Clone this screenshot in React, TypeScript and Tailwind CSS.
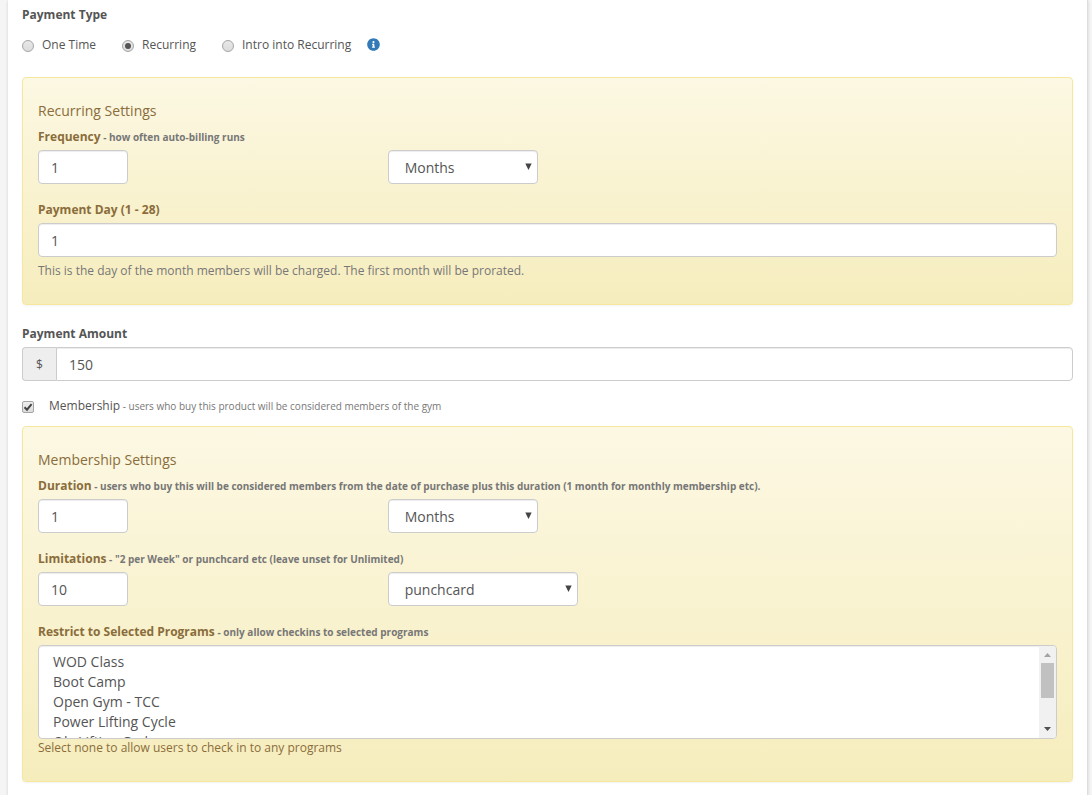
import { useState, type ReactNode } from "react";
import { FaInfoCircle } from "react-icons/fa";

const PAYMENT_TYPES = ["One Time", "Recurring", "Intro into Recurring"];

const PROGRAMS = [
  "WOD Class",
  "Boot Camp",
  "Open Gym - TCC",
  "Power Lifting Cycle",
  "Oly Lifting Cycle",
  "Kids Class",
  "Yoga",
  "Endurance",
  "Personal Training",
  "Foundations",
];

const inputClass =
  "block h-[34px] rounded border border-[#ccc] bg-white px-3 text-sm text-[#555] shadow-[inset_0_1px_1px_rgba(0,0,0,0.075)] outline-none focus:border-[#66afe9]";

function SettingsBox({ title, children }: { title: string; children: ReactNode }) {
  return (
    <section className="rounded border border-[#f5e79e] bg-linear-to-b from-[#fcf8e3] to-[#f6edbd] px-[15px] pt-[25px] text-[#8a6d3b] shadow-[0_1px_2px_rgba(0,0,0,0.05)]">
      <h4 className="mb-2.5 text-sm/[15px]">{title}</h4>
      {children}
    </section>
  );
}

function FieldLabel({ htmlFor, text, hint }: { htmlFor: string; text: string; hint?: string }) {
  return (
    <label htmlFor={htmlFor} className="mb-[5px] block text-xs/[17px] font-bold">
      {text}
      {hint && <small className="text-[10px]/[10px] text-[#777]"> - {hint}</small>}
    </label>
  );
}

function Dropdown({
  label,
  options,
  width,
}: {
  label: string;
  options: string[];
  width: string;
}) {
  return (
    <div className={`relative ${width}`}>
      <select aria-label={label} className={`${inputClass} w-full appearance-none pt-0.5 pl-4`}>
        {options.map((option) => (
          <option key={option}>{option}</option>
        ))}
      </select>
      <svg
        className="pointer-events-none absolute top-[13px] right-1.5 h-[7px] w-[7px] fill-[#444]"
        viewBox="0 0 7 7"
      >
        <path d="M0.3 0.5h6.4L3.5 7z" />
      </svg>
    </div>
  );
}

function ProgramList() {
  return (
    <div className="flex h-[94px] overflow-hidden rounded border border-[#ccc] bg-white shadow-[inset_0_1px_1px_rgba(0,0,0,0.075)]">
      <select
        id="programs"
        multiple
        className="h-full min-w-0 flex-1 bg-transparent px-3 py-1.5 text-sm text-[#555] outline-none [scrollbar-width:none]"
      >
        {PROGRAMS.map((program) => (
          <option key={program} className="min-h-5 px-0.5 pb-px">
            {program}
          </option>
        ))}
      </select>
      {/* Scrollbar */}
      <div aria-hidden="true" className="flex w-[17px] flex-col items-center bg-[#f1f1f1]">
        <svg className="h-[17px] w-[17px] fill-[#a3a3a3]" viewBox="0 0 17 17">
          <path d="M5 11h7L8.5 7z" />
        </svg>
        <div className="h-[35px] w-[13px] bg-[#c1c1c1]" />
        <svg className="mt-auto h-[17px] w-[17px] fill-[#505050]" viewBox="0 0 17 17">
          <path d="M5 6h7L8.5 10z" />
        </svg>
      </div>
    </div>
  );
}

export default function App() {
  const [paymentType, setPaymentType] = useState("Recurring");
  const [membership, setMembership] = useState(true);

  return (
    <div className="min-h-screen bg-[#f5f5f5] pr-1 pl-2 font-['Open_Sans',sans-serif] text-xs/[17px] text-[#555]">
      <form className="min-h-screen border-r border-[#ddd] bg-white px-3.5 pt-1.5 pb-3 shadow-[0_1px_3px_rgba(0,0,0,0.15)]">
        <fieldset>
          <legend className="font-bold">Payment Type</legend>
          <div className="mt-[13px] mb-6 flex items-center">
            {PAYMENT_TYPES.map((type) => (
              <label key={type} className="mr-[26px] flex items-center gap-2 last-of-type:mr-4">
                <input
                  type="radio"
                  name="paymentType"
                  checked={paymentType === type}
                  onChange={() => setPaymentType(type)}
                  className="mt-0.5 grid h-3 w-3 appearance-none place-items-center rounded-full border border-[#a5a5a5] bg-linear-to-b from-[#e8e8e8] to-[#dcdcdc] before:h-1.5 before:w-1.5 before:rounded-full checked:before:bg-[#555]"
                />
                {type}
              </label>
            ))}
            <button type="button" aria-label="About payment types" className="text-[#337ab7]">
              <FaInfoCircle className="h-[13px] w-[13px]" />
            </button>
          </div>
        </fieldset>

        <SettingsBox title="Recurring Settings">
          <FieldLabel htmlFor="frequency" text="Frequency" hint="how often auto-billing runs" />
          <div className="mb-[17px] grid grid-cols-3 gap-[30px]">
            <input id="frequency" defaultValue="1" className={`${inputClass} w-[90px]`} />
            <Dropdown label="Frequency unit" options={["Months", "Weeks", "Days"]} width="w-[150px]" />
          </div>
          <FieldLabel htmlFor="paymentDay" text="Payment Day (1 - 28)" />
          <input id="paymentDay" defaultValue="1" className={`${inputClass} w-full`} />
          <p className="mt-[5px] mb-[25px] text-[#777]">
            This is the day of the month members will be charged. The first month will be prorated.
          </p>
        </SettingsBox>

        <div className="mt-5 mb-4">
          <FieldLabel htmlFor="amount" text="Payment Amount" />
          <div className="flex">
            <span className="flex w-[34px] items-center justify-center rounded-l border border-r-0 border-[#ccc] bg-[#eee]">
              $
            </span>
            <input
              id="amount"
              defaultValue="150"
              className={`${inputClass} min-w-0 flex-1 rounded-l-none`}
            />
          </div>
        </div>

        <label className="mb-3 flex items-center">
          <input
            type="checkbox"
            checked={membership}
            onChange={(e) => setMembership(e.target.checked)}
            className="peer mt-0.5 mr-[15px] h-3 w-3 appearance-none rounded-xs border border-[#a5a5a5] bg-linear-to-b from-[#eee] to-[#dcdcdc]"
          />
          <svg
            className="pointer-events-none invisible mt-0.5 -ml-[27px] mr-[15px] h-3 w-3 fill-none stroke-[#444] stroke-2 peer-checked:visible"
            viewBox="0 0 12 12"
          >
            <path d="M2.5 6.2L5 8.7L9.6 3.2" />
          </svg>
          <span>
            Membership
            <small className="text-[10px]/[10px] text-[#777]">
              {" "}
              - users who buy this product will be considered members of the gym
            </small>
          </span>
        </label>

        <SettingsBox title="Membership Settings">
          <FieldLabel
            htmlFor="duration"
            text="Duration"
            hint="users who buy this will be considered members from the date of purchase plus this duration (1 month for monthly membership etc)."
          />
          <div className="mb-[17px] grid grid-cols-3 gap-[30px]">
            <input id="duration" defaultValue="1" className={`${inputClass} w-[90px]`} />
            <Dropdown label="Duration unit" options={["Months", "Weeks", "Days"]} width="w-[150px]" />
          </div>
          <FieldLabel
            htmlFor="limitations"
            text="Limitations"
            hint={'"2 per Week" or punchcard etc (leave unset for Unlimited)'}
          />
          <div className="mb-[17px] grid grid-cols-3 gap-[30px]">
            <input id="limitations" defaultValue="10" className={`${inputClass} w-[90px]`} />
            <Dropdown label="Limitation type" options={["punchcard", "per Week", "per Month"]} width="w-[190px]" />
          </div>
          <FieldLabel
            htmlFor="programs"
            text="Restrict to Selected Programs"
            hint="only allow checkins to selected programs"
          />
          <ProgramList />
          <p className="mb-[25px]">Select none to allow users to check in to any programs</p>
        </SettingsBox>
      </form>
    </div>
  );
}
